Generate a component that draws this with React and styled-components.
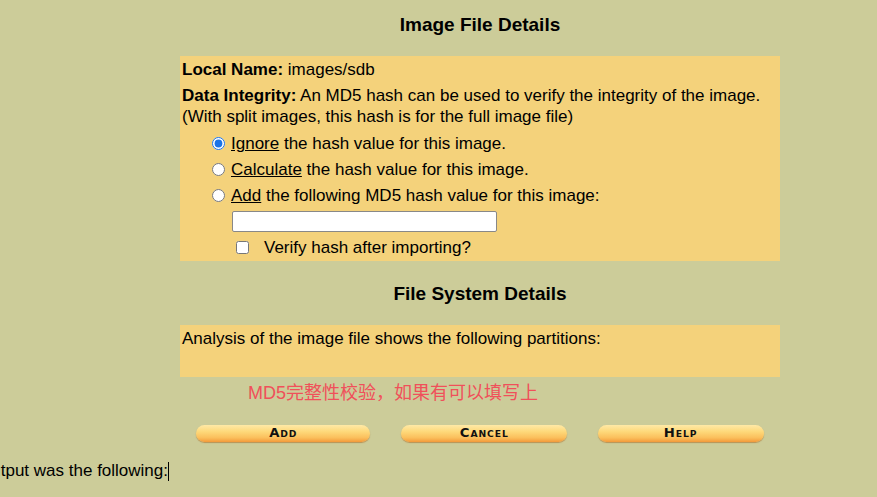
import React from 'react';
import styled, { createGlobalStyle } from 'styled-components';

const GlobalStyle = createGlobalStyle`
html, body {
  margin: 0;
  padding: 0;
  background: #cccc99;
  font-family: "Liberation Sans", Arial, sans-serif;
  color: #000;
  overflow: hidden;
}
`;

const Page = styled.div`
width: 877px;
height: 497px;
position: relative;
`;

const Column = styled.div`
width: 600px;
margin-left: 180px;
padding-top: 14px;
`;

const Title = styled.h2`
margin: ${p => p.top || 0}px 0 0 0;
text-align: center;
font-size: 19px;
font-weight: bold;
line-height: 22px;
`;

const Box = styled.div`
box-sizing: border-box;
background: #f4d27b;
margin-top: 20px;
height: ${p => p.h}px;
padding: 3px 2px;
font-size: 17px;
line-height: 21px;
`;

const Line = styled.div`
margin-bottom: ${p => p.gap || 0}px;
`;

const Options = styled.div`
padding-left: 28px;
display: flex;
flex-direction: column;
gap: 5px;
margin-top: 6px;
`;

const Option = styled.label`
display: flex;
align-items: center;
gap: 6px;
height: 21px;
`;

const Radio = styled.input`
margin: 0 0 0 2px;
width: 13px;
height: 13px;
accent-color: #1a73e8;
`;

const Key = styled.u``;

const HashInput = styled.input`
display: block;
margin: 5px 0 0 50px;
width: 265px;
height: 21px;
box-sizing: border-box;
border: 1px solid #888;
border-radius: 2px;
background: #fff;
`;

const CheckRow = styled.label`
display: flex;
align-items: center;
gap: 15px;
padding-left: 54px;
height: 21px;
margin-top: 5px;
`;

const Check = styled.input`
margin: 0;
width: 13px;
height: 13px;
`;

const Note = styled.div`
margin: 3px 0 0 68px;
color: #f0505a;
font-size: 18px;
line-height: 26px;
font-family: "Liberation Sans", "Noto Sans CJK SC", sans-serif;
`;

const Buttons = styled.div`
display: flex;
margin-top: 19px;
padding-left: 16px;
gap: 31px;
`;

const Button = styled.button`
width: ${p => p.w}px;
height: 17px;
border: none;
border-radius: 9px;
padding: 0;
background: linear-gradient(#ffe9a6 0%, #fed879 40%, #fbbf5c 75%, #f39a3a 100%);
box-shadow: 0 1px 1px rgba(170, 100, 30, 0.55);
color: #111;
`;

const ButtonLabel = styled.span`
display: inline-block;
transform: scaleX(1.15);
font-family: "DejaVu Sans", sans-serif;
font-weight: bold;
font-variant: small-caps;
font-size: 11.5px;
letter-spacing: 0.8px;
line-height: 17px;
`;

const Output = styled.div`
position: absolute;
left: 0;
top: 461px;
width: 169px;
display: flex;
justify-content: flex-end;
white-space: nowrap;
font-size: 17px;
line-height: 20px;
`;

const Caret = styled.span`
flex-shrink: 0;
display: inline-block;
width: 1px;
height: 19px;
background: #000;
align-self: center;
`;

export default function App() {
  return (
    <Page>
      <GlobalStyle />
      <Column>
        <Title>Image File Details</Title>
        <Box h={205}>
          <Line gap={5}><b>Local Name:</b> images/sdb</Line>
          <Line><b>Data Integrity:</b> An MD5 hash can be used to verify the integrity of the image.</Line>
          <Line>(With split images, this hash is for the full image file)</Line>
          <Options>
            <Option><Radio type="radio" name="hash" defaultChecked /><span><Key>Ignore</Key> the hash value for this image.</span></Option>
            <Option><Radio type="radio" name="hash" /><span><Key>Calculate</Key> the hash value for this image.</span></Option>
            <Option><Radio type="radio" name="hash" /><span><Key>Add</Key> the following MD5 hash value for this image:</span></Option>
          </Options>
          <HashInput type="text" />
          <CheckRow><Check type="checkbox" /><span>Verify hash after importing?</span></CheckRow>
        </Box>
        <Title top={22}>File System Details</Title>
        <Box h={52}>Analysis of the image file shows the following partitions:</Box>
        <Note>MD5完整性校验，如果有可以填写上</Note>
        <Buttons>
          <Button w={174}><ButtonLabel>Add</ButtonLabel></Button>
          <Button w={166}><ButtonLabel>Cancel</ButtonLabel></Button>
          <Button w={166}><ButtonLabel>Help</ButtonLabel></Button>
        </Buttons>
      </Column>
      <Output><span>The output was the following:</span><Caret /></Output>
    </Page>
  );
}
